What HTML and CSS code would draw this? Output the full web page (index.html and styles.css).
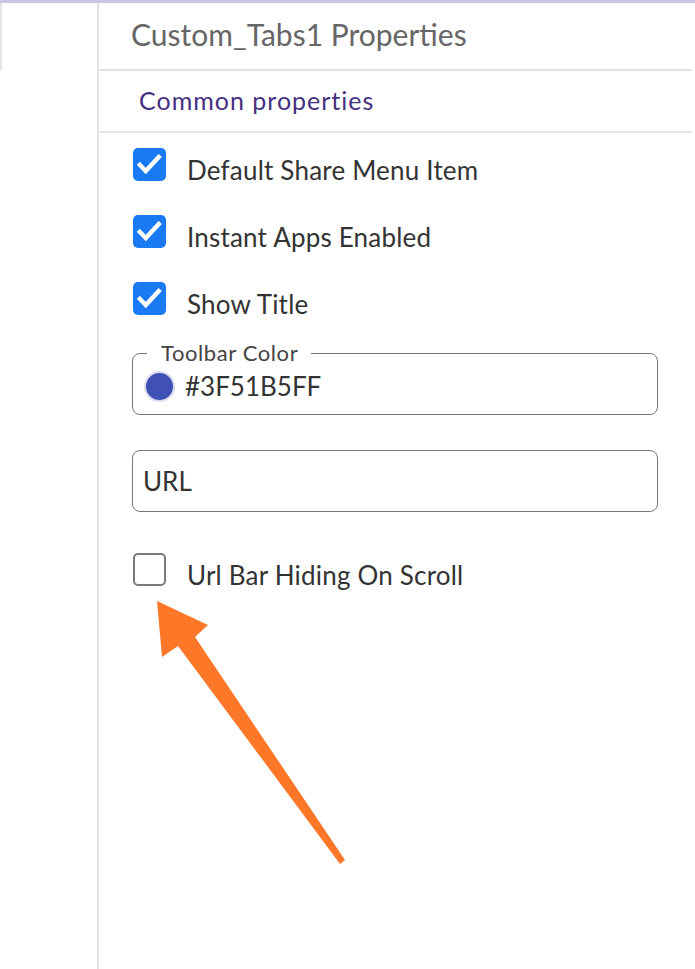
FILE: index.html
```html
<!DOCTYPE html>
<html lang="en">
<head>
	<meta charset="UTF-8">
	<meta name="viewport" content="width=device-width, initial-scale=1.0">
	<title>Custom_Tabs1 Properties</title>
	<link rel="stylesheet" href="styles.css">
</head>
<body>
	<div class="topbar"></div>
	<div class="layout">
		<aside class="sidebar">
			<div class="sidebar__tab"></div>
		</aside>
		<main class="panel">
			<h1 class="panel__title">Custom_Tabs1 Properties</h1>
			<h2 class="panel__section">Common properties</h2>
			<div class="props">
				<label class="check">
					<span class="check__box check__box--on">
						<svg viewBox="0 0 24 24"><path d="M5 12.3l4.3 4.5L18.7 6.6" /></svg>
					</span>
					<span class="check__label">Default Share Menu Item</span>
				</label>
				<label class="check">
					<span class="check__box check__box--on">
						<svg viewBox="0 0 24 24"><path d="M5 12.3l4.3 4.5L18.7 6.6" /></svg>
					</span>
					<span class="check__label">Instant Apps Enabled</span>
				</label>
				<label class="check">
					<span class="check__box check__box--on">
						<svg viewBox="0 0 24 24"><path d="M5 12.3l4.3 4.5L18.7 6.6" /></svg>
					</span>
					<span class="check__label">Show Title</span>
				</label>
				<!-- поле кольору -->
				<fieldset class="field field--legend">
					<legend class="field__legend">Toolbar Color</legend>
					<span class="swatch"></span>
					<span class="field__value">#3F51B5FF</span>
				</fieldset>
				<div class="field field--url">
					<span class="field__value">URL</span>
				</div>
				<label class="check">
					<span class="check__box"></span>
					<span class="check__label">Url Bar Hiding On Scroll</span>
				</label>
			</div>
		</main>
	</div>
	<!-- стрілка поверх вмісту -->
	<svg class="arrow" width="695" height="969" viewBox="0 0 695 969">
		<polygon points="157,601 208,625 195,637 345,860 340,864 178,646 162,657" fill="#fd7728" />
	</svg>
</body>
</html>
```

FILE: styles.css
```css
*,
*::before,
*::after {
	box-sizing: border-box;
	margin: 0;
	padding: 0;
}

html,
body {
	height: 100%;
}

body {
	font-family: Lato, "Open Sans", sans-serif;
	background-color: #fff;
	color: #333;
	overflow: hidden;
}

.topbar {
	height: 3px;
	background-color: #cbc4e4;
}

.layout {
	display: flex;
	height: calc(100% - 3px);
	padding-right: 3px;
}

.sidebar {
	width: 99px;
	flex-shrink: 0;
	border-right: 2px solid #e3e3e3;
}

.sidebar__tab {
	height: 67px;
	border-left: 2px solid #e6e6e6;
}

.panel {
	flex: 1;
}

.panel__title {
	height: 68px;
	display: flex;
	align-items: center;
	padding-left: 32px;
	padding-bottom: 4px;
	font-size: 30px;
	font-weight: 400;
	color: #666;
	border-bottom: 2px solid #e3e3e3;
}

.panel__section {
	height: 62px;
	display: flex;
	align-items: center;
	padding-left: 40px;
	padding-bottom: 3px;
	font-size: 25px;
	letter-spacing: 1px;
	font-weight: 400;
	color: #45307f;
	border-bottom: 2px solid #e3e3e3;
}

.props {
	padding: 14px 34px 0 34px;
}

.check {
	display: flex;
	align-items: center;
	gap: 21px;
	height: 34px;
	margin-bottom: 33px;
}

.check__box {
	width: 33px;
	height: 33px;
	flex-shrink: 0;
	border: 2px solid #7a7a7a;
	border-radius: 5px;
}

.check__box--on {
	background-color: #1a7af3;
	border: none;
}

.check__box svg {
	display: block;
	width: 33px;
	height: 33px;
	fill: none;
	stroke: #fff;
	stroke-width: 3.2;
	stroke-linecap: square;
	stroke-linejoin: miter;
}

.check__label {
	font-size: 26px;
	letter-spacing: 0.2px;
	color: #333;
	padding-top: 11px;
}

.field {
	height: 62px;
	margin-left: -1px;
	border: 1.5px solid #777;
	border-radius: 8px;
	display: flex;
	align-items: center;
	padding-left: 11px;
	margin-bottom: 40px;
}

.field--legend {
	margin-top: -6px;
	margin-bottom: 35px;
	height: 73px;
	padding-bottom: 6px;
}

.field--url {
	padding-left: 10px;
}

.field__legend {
	margin-left: 3px;
	padding: 0 13px 0 14px;
	font-size: 22px;
	letter-spacing: 0.6px;
	color: #444;
	line-height: 1;
}

.swatch {
	width: 31px;
	height: 31px;
	border-radius: 50%;
	background-color: #3f51b5;
	border: 2px solid #dcdcef;
	margin-right: 10px;
}

.field__value {
	font-size: 26px;
	color: #333;
}

.arrow {
	position: absolute;
	left: 0;
	top: 0;
	pointer-events: none;
}
```
